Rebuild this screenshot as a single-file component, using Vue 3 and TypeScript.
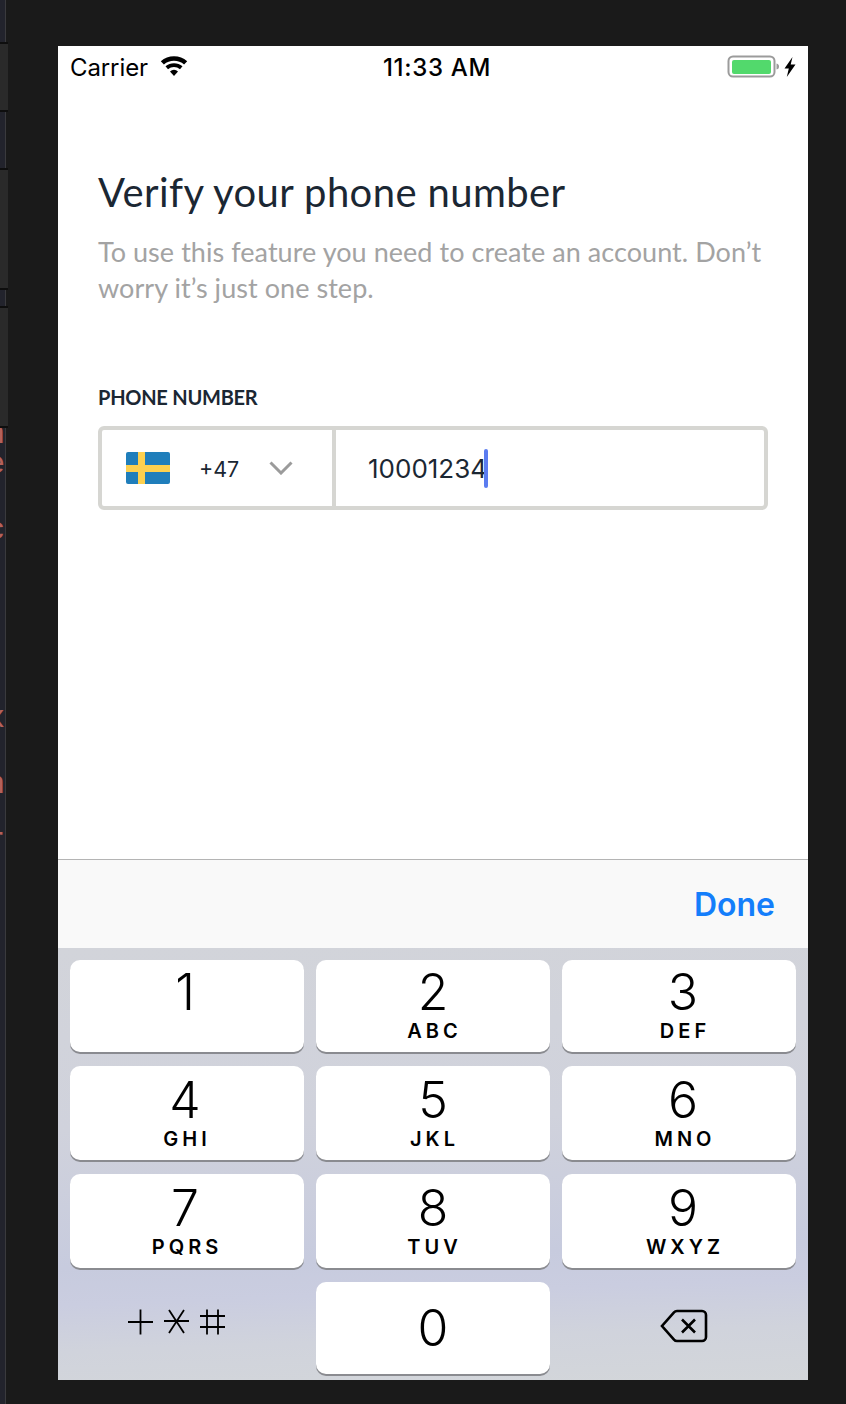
<script setup lang="ts">
interface Key { d: string; l?: string }
const rows: Key[][] = [
  [{ d: '1' }, { d: '2', l: 'ABC' }, { d: '3', l: 'DEF' }],
  [{ d: '4', l: 'GHI' }, { d: '5', l: 'JKL' }, { d: '6', l: 'MNO' }],
  [{ d: '7', l: 'PQRS' }, { d: '8', l: 'TUV' }, { d: '9', l: 'WXYZ' }],
]
const marks = [
  { t: 'n', y: 434 }, { t: 'e', y: 464 }, { t: 'c', y: 530 },
  { t: 'x', y: 718 }, { t: 'n', y: 784 }, { t: 'r', y: 840 },
]
</script>

<template>
  <div class="window">
    <div class="strip">
      <span v-for="m in marks" :key="m.y" class="mark" :style="{ top: m.y - 15 + 'px' }">{{ m.t }}</span>
      <div class="tab t2"></div>
      <div class="tab t3"></div>
      <div class="tab t4"></div>
    </div>
    <main class="phone">
      <header class="status">
        <div class="st-left">
          <span class="carrier">Carrier</span>
          <svg class="wifi" width="28" height="20" viewBox="0 0 28 20">
            <path d="M14 20l-4-4.6a6 6 0 0 1 8 0z" fill="#000" />
            <path d="M8 13.2l-2.5-2.9a13 13 0 0 1 17 0L20 13.2a9.4 9.4 0 0 0-12 0z" fill="#000" />
            <path d="M3.9 8.5L.8 5.2a20 20 0 0 1 26.4 0l-3.1 3.3a15.5 15.5 0 0 0-20.2 0z" fill="#000" />
          </svg>
        </div>
        <span class="time">11:33 AM</span>
        <div class="st-right">
          <svg width="56" height="24" viewBox="0 0 56 24">
            <rect x="1.5" y="1.5" width="46" height="20" rx="4.5" fill="#fff" stroke="#9b9b9b" stroke-width="2" />
            <rect x="5" y="5" width="39" height="14" rx="2" fill="#52d96c" />
            <path d="M49.5 8.5c2 .5 2.5 1.5 2.5 3s-.5 2.5-2.5 3z" fill="#9b9b9b" />
          </svg>
          <svg width="12" height="20" viewBox="0 0 12 20">
            <path d="M8.500 0L.5 11.500h4.300L2.800 20 11.500 7.500H6.700z" fill="#000" />
          </svg>
        </div>
      </header>

      <section class="content">
        <h1>Verify your phone number</h1>
        <p class="intro">To use this feature you need to create an account. Don’t worry it’s just one step.</p>
        <div class="label">PHONE NUMBER</div>
        <div class="field">
          <div class="country">
            <svg class="flag" width="44" height="32" viewBox="0 0 44 32">
              <rect width="44" height="32" rx="2" fill="#1f7ebb" />
              <rect x="12" width="7" height="32" fill="#fcd04f" />
              <rect y="13" width="44" height="7" fill="#fcd04f" />
            </svg>
            <span class="code">+47</span>
            <svg class="chev" width="24" height="14" viewBox="0 0 24 14">
              <path d="M1.500 1.500L12 12 22.500 1.500" fill="none" stroke="#9b9b9b" stroke-width="3" />
            </svg>
          </div>
          <div class="number"><span>10001234</span><i class="caret"></i></div>
        </div>
      </section>

      <div class="toolbar"><span class="done">Done</span></div>

      <section class="keyboard">
        <div v-for="(row, i) in rows" :key="i" class="kb-row">
          <div v-for="k in row" :key="k.d" class="key">
            <span class="digit">{{ k.d }}</span>
            <span v-if="k.l" class="letters">{{ k.l }}</span>
          </div>
        </div>
        <div class="kb-row last">
          <div class="key ghost symbols">
            <svg width="100" height="28" viewBox="0 0 100 28">
              <g stroke="#000" stroke-width="1.800" fill="none">
                <path d="M1 14h25M13.500 1.500v25" />
                <path d="M37 13h25M42 2l15 23M57 2L42 25" />
                <path d="M73 8h25M73 19h25M80 1.500v25M91 1.500v25" />
              </g>
            </svg>
          </div>
          <div class="key"><span class="digit zero">0</span></div>
          <div class="key ghost bksp">
            <svg width="48" height="36" viewBox="0 0 48 36">
              <path d="M17 3h25a4 4 0 0 1 4 4v22a4 4 0 0 1-4 4H17a4 4 0 0 1-3-1.400L2 18 14 4.400A4 4 0 0 1 17 3z" fill="none" stroke="#000" stroke-width="2.600" />
              <path d="M22 11.500l13 13M35 11.500l-13 13" stroke="#000" stroke-width="2.600" fill="none" />
            </svg>
          </div>
        </div>
      </section>
    </main>
  </div>
</template>

<style>
html, body { margin: 0; background: #1a1a1a; }
</style>

<style scoped>
.window {
  width: 846px;
  height: 1404px;
  background: #1a1a1a;
  padding: 46px 38px 24px 58px;
  box-sizing: border-box;
  position: relative;
  overflow: hidden;
  font-family: Inter, "Liberation Sans", sans-serif;
}
.strip {
  position: absolute;
  left: 0;
  top: 0;
  width: 8px;
  height: 1404px;
  background: linear-gradient(90deg, #22232c 5px, #3a3a3d 5px 6px, #1a1a1a 6px);
  overflow: hidden;
}
.tab {
  position: absolute;
  left: 0;
  width: 8px;
  box-sizing: border-box;
  background: #2a2a2a;
  border-top: 2px solid #0e0e0e;
  border-bottom: 2px solid #0e0e0e;
}
.t2 { top: 42px; height: 70px; }
.t3 { top: 168px; height: 122px; }
.t4 { top: 306px; height: 122px; }
.mark {
  position: absolute;
  left: -14px;
  width: 20px;
  overflow: hidden;
  font: 32px/32px "Liberation Mono", monospace;
  color: #b5615a;
}
.phone {
  width: 750px;
  height: 1334px;
  background: #fff;
  display: flex;
  flex-direction: column;
}
.status {
  height: 42px;
  box-sizing: border-box;
  padding: 2px 12px 0 12px;
  display: grid;
  grid-template-columns: 1fr auto 1fr;
  align-items: center;
  color: #000;
}
.st-left { display: flex; align-items: center; gap: 12px; }
.carrier { font-size: 24px; line-height: 40px; letter-spacing: -0.1px; }
.wifi { margin-top: -4px; }
.time { font-size: 24px; font-weight: 500; letter-spacing: 0.7px; margin: -1px 0 0 8px; }
.st-right { display: flex; justify-content: flex-end; align-items: center; gap: 1px; margin-top: -2px; }
.content { flex: 1; padding: 79px 40px 0; }
h1 {
  margin: 0;
  font-family: Lato, "Open Sans", sans-serif;
  font-size: 40px;
  font-weight: 400;
  line-height: 50px;
  color: #1b2733;
  letter-spacing: 0.4px;
}
.intro {
  margin: 17px 0 0;
  font-family: Lato, "Open Sans", sans-serif;
  font-size: 27px;
  line-height: 36px;
  color: #a3a3a3;
  letter-spacing: 0.05px;
}
.label {
  margin-top: 78px;
  font-family: Lato, "Open Sans", sans-serif;
  font-size: 20px;
  font-weight: 700;
  line-height: 26px;
  color: #1b2733;
  letter-spacing: -0.25px;
}
.field {
  margin-top: 16px;
  height: 84px;
  box-sizing: border-box;
  border: 4px solid #d6d6d2;
  border-radius: 6px;
  display: flex;
}
.country {
  width: 234px;
  box-sizing: border-box;
  flex: none;
  border-right: 4px solid #d6d6d2;
  display: flex;
  align-items: center;
  padding-left: 24px;
}
.code { margin: 1px 0 0 29px; font-size: 21.5px; color: #1b2733; }
.chev { margin-left: 30px; }
.number {
  flex: 1;
  display: flex;
  align-items: center;
  padding-left: 32px;
  font-size: 26px;
  color: #1b2733;
}
.caret { width: 4px; height: 39px; background: #5b7cf0; border-radius: 2px; margin-left: -3px; }
.toolbar {
  height: 88px;
  border-top: 1px solid #b4b4b4;
  background: #f9f9f9;
  display: flex;
  align-items: center;
  justify-content: flex-end;
  padding-right: 33px;
}
.done { font-size: 32px; font-weight: 600; color: #147efb; }
.keyboard {
  height: 432px;
  box-sizing: border-box;
  padding: 12px 12px 0;
  background: linear-gradient(178deg, #d2d4da 0%, #d0d2dc 40%, #c7cbde 70%, #cacde0 78%, #d0d3dc 88%, #d3d6da 100%);
  display: flex;
  flex-direction: column;
  gap: 14px;
}
.kb-row { display: grid; grid-template-columns: 234px 234px 234px; justify-content: space-between; }
.key {
  height: 92px;
  background: #fff;
  border-radius: 10px;
  box-shadow: 0 2px 0 #8a8b90;
  display: flex;
  flex-direction: column;
  align-items: center;
  color: #000;
  box-sizing: border-box;
}
.kb-row:nth-child(2) .key, .kb-row:nth-child(3) .key { height: 94px; }
.kb-row:nth-child(2) .digit, .kb-row:nth-child(3) .digit { margin-top: 4px; }
.key:nth-child(1) .digit { margin-right: 4px; }
.key:nth-child(2) .letters { margin-left: 3px; }
.key:nth-child(3) { padding-left: 8px; }
.key:nth-child(3) .letters { margin-left: 4px; }
.digit { font-size: 50px; line-height: 60px; margin-top: 2px; font-weight: 300; }
.letters { font-size: 20px; font-weight: 600; letter-spacing: 4px; line-height: 20px; margin-top: -1px; }
.kb-row.last .zero { margin: 16px 0 0; }
.kb-row.last .ghost { background: transparent; box-shadow: none; justify-content: center; }
.kb-row.last .symbols { padding: 0 20px 12px 0; }
.kb-row.last .bksp { padding: 0 0 4px 10px; }
</style>
